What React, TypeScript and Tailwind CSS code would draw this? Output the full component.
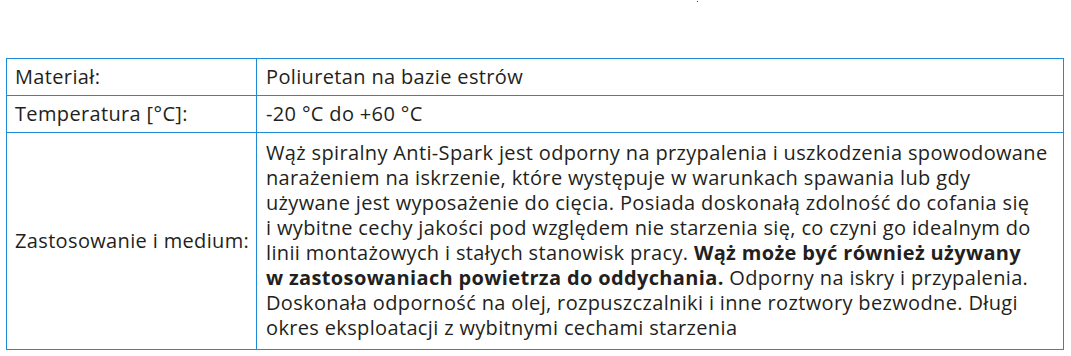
import React from "react";

const lines: React.ReactNode[] = [
  "Wąż spiralny Anti-Spark jest odporny na przypalenia i uszkodzenia spowodowane",
  "narażeniem na iskrzenie, które występuje w warunkach spawania lub gdy",
  "używane jest wyposażenie do cięcia. Posiada doskonałą zdolność do cofania się",
  "i wybitne cechy jakości pod względem nie starzenia się, co czyni go idealnym do",
  <>
    linii montażowych i stałych stanowisk pracy. <b className="font-bold">Wąż może być również używany</b>
  </>,
  <>
    <b className="font-bold">w zastosowaniach powietrza do oddychania.</b> Odporny na iskry i przypalenia.
  </>,
  "Doskonała odporność na olej, rozpuszczalniki i inne roztwory bezwodne. Długi",
  "okres eksploatacji z wybitnymi cechami starzenia",
];

export default function App() {
  return (
    <div
      className="w-[1071px] h-[356px] bg-white relative text-[#231f20] text-[20px] tracking-[0.35px]"
      style={{ fontFamily: '"Open Sans", "Noto Sans", sans-serif' }}
    >
      <div className="absolute left-[697px] top-[1px] w-[1px] h-[1px] bg-[#2233dd]" />
      <div className="pt-[58px] pl-[6px]">
        <div className="w-[1058px] grid grid-cols-[250px_1fr] border border-[#1d8bd8]">
          <div className="h-[37px] flex items-center pl-[8px] border-r border-b border-[#1d8bd8]">Materiał:</div>
          <div className="h-[37px] flex items-center pl-[9px] border-b border-[#1d8bd8]">Poliuretan na bazie estrów</div>
          <div className="h-[37px] flex items-center pl-[8px] border-r border-b border-[#1d8bd8]">Temperatura [°C]:</div>
          <div className="h-[37px] flex items-center pl-[9px] border-b border-[#1d8bd8]">-20 °C do +60 °C</div>
          <div className="h-[216px] flex items-center pl-[8px] border-r border-[#1d8bd8]">Zastosowanie i medium:</div>
          <div className="h-[216px] pl-[9px] pt-[7px] leading-[25px] whitespace-nowrap">
            {lines.map((l, i) => (
              <div key={i}>{l}</div>
            ))}
          </div>
        </div>
      </div>
    </div>
  );
}
